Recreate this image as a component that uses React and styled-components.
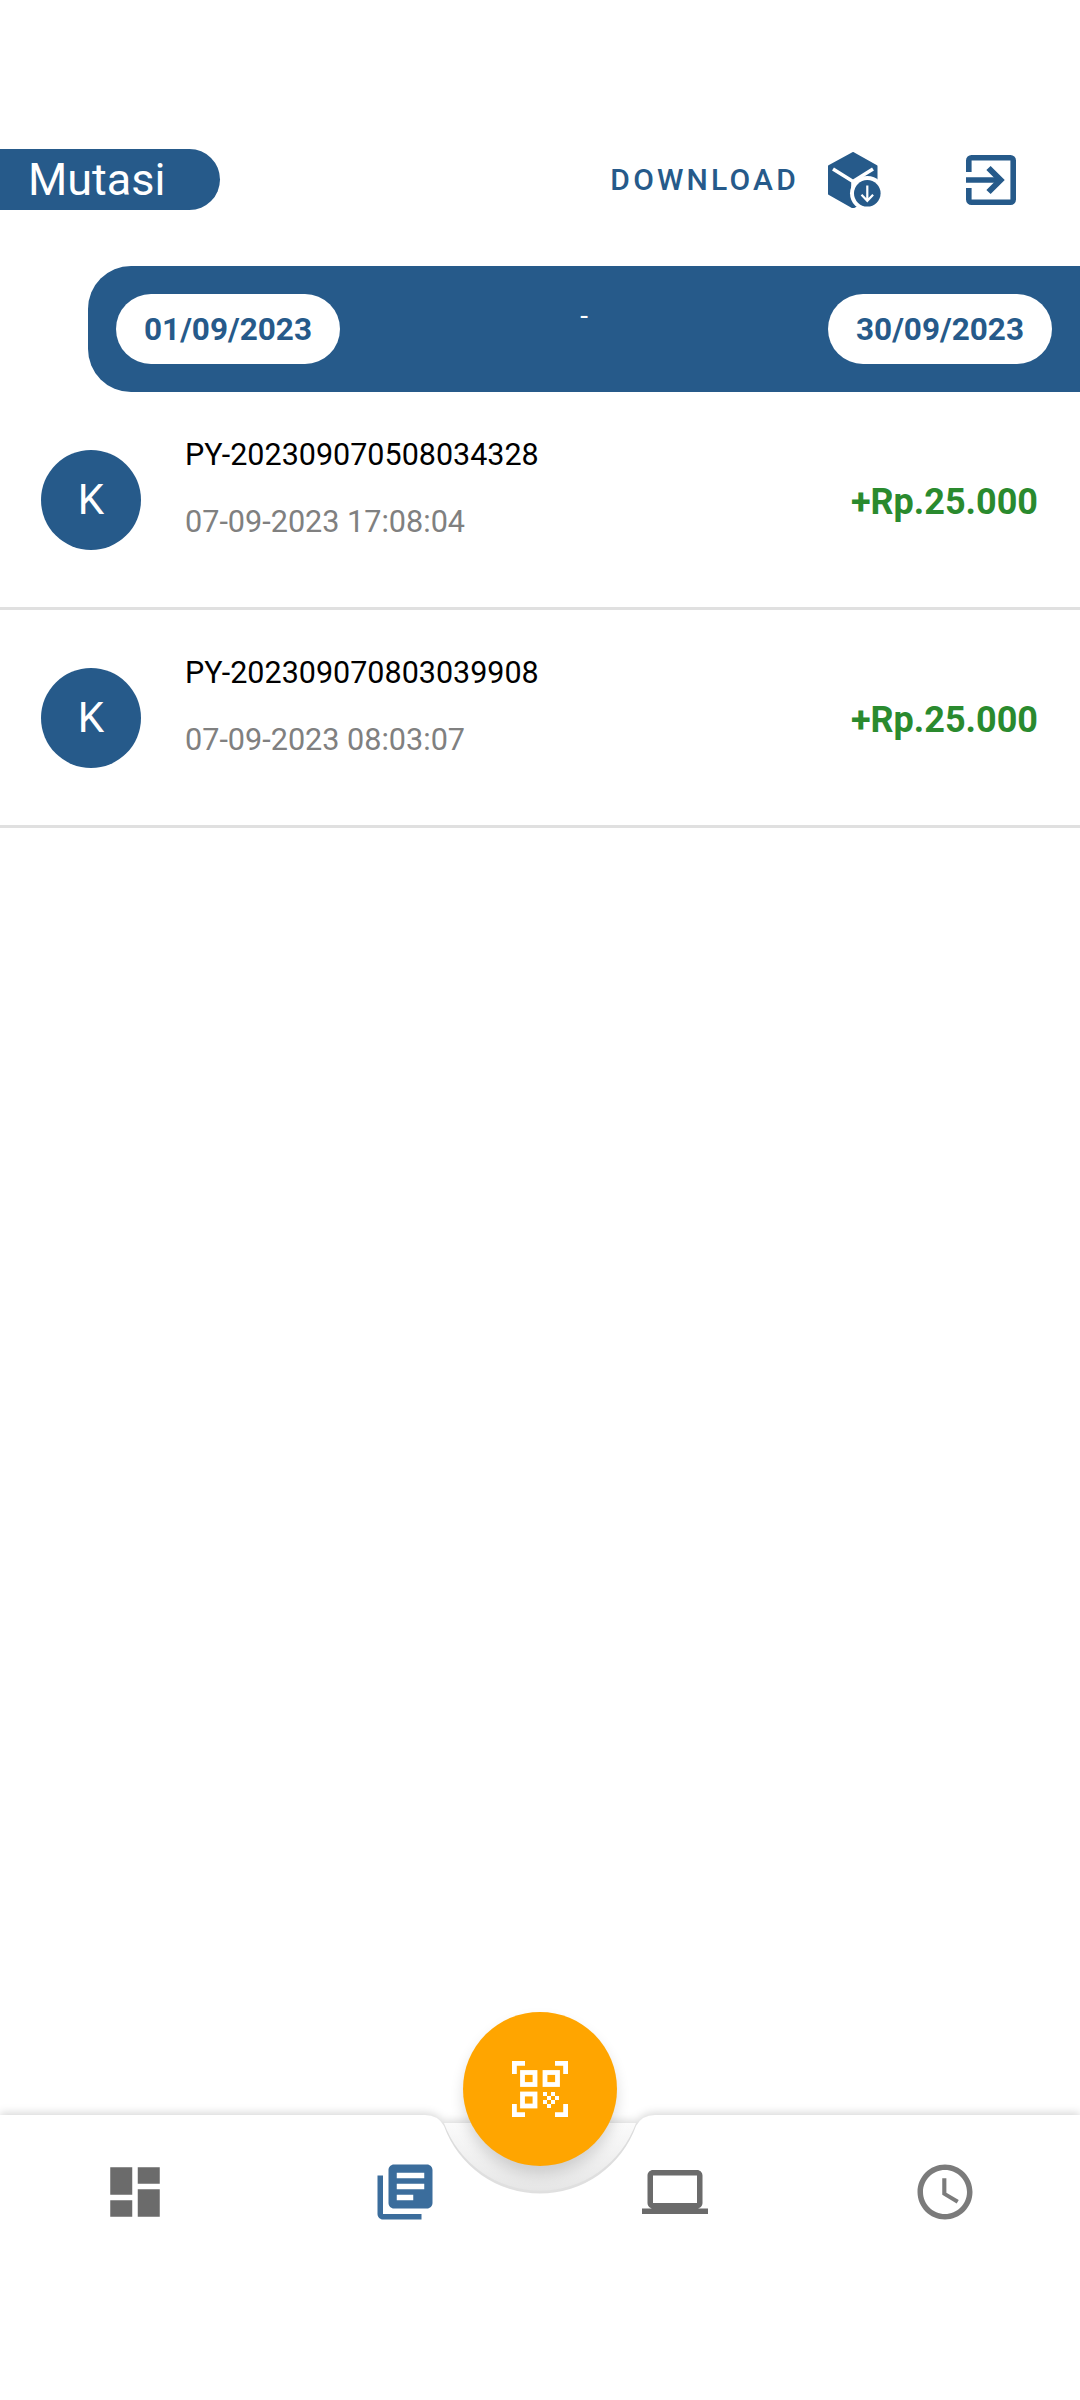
import styled, { createGlobalStyle } from "styled-components";
import { MdDashboard, MdLibraryBooks, MdLaptop, MdAccessTime } from "react-icons/md";

const GlobalStyle = createGlobalStyle`
  html, body {
    margin: 0;
    background: #fff;
    font-family: Roboto, "Liberation Sans", sans-serif;
  }
`;

const BLUE = "#265a8a";

const Page = styled.div`
  width: 1080px;
  height: 2400px;
  display: flex;
  flex-direction: column;
  padding-top: 149px;
  box-sizing: border-box;
  overflow: hidden;
  background: #fff;
`;

const Header = styled.header`
  height: 61px;
  display: flex;
  align-items: center;
  justify-content: space-between;
  padding-right: 64px;
`;

const TitlePill = styled.h1`
  width: 220px;
  height: 61px;
  box-sizing: border-box;
  margin: 0;
  padding-left: 28px;
  display: flex;
  align-items: center;
  background: ${BLUE};
  border-radius: 0 31px 31px 0;
  color: #fff;
  font-size: 45px;
  font-weight: 400;
`;

const Actions = styled.div`
  display: flex;
  align-items: center;
`;

const DownloadLabel = styled.span`
  color: ${BLUE};
  font-size: 30px;
  font-weight: 500;
  letter-spacing: 3.2px;
  margin-right: 29px;
`;

const CubeIcon = styled.svg`
  width: 53px;
  height: 56px;
  margin-right: 85px;
`;

const ExitIcon = styled.svg`
  width: 50px;
  height: 50px;
`;

const DateBar = styled.div`
  margin: 56px 0 0 88px;
  height: 126px;
  padding: 0 28px;
  display: flex;
  align-items: center;
  justify-content: space-between;
  background: ${BLUE};
  border-radius: 43px 0 0 43px;
`;

const DatePill = styled.div`
  width: 224px;
  height: 70px;
  display: flex;
  align-items: center;
  justify-content: center;
  background: #fff;
  border-radius: 35px;
  color: ${BLUE};
  font-size: 31.5px;
  font-weight: 700;
`;

const Dash = styled.span`
  color: #fff;
  font-size: 28px;
  line-height: 28px;
  margin-bottom: 26px;
`;

const List = styled.main`
  flex: 1;
`;

const Row = styled.div`
  height: 215px;
  display: flex;
  align-items: center;
  padding: 0 42px 0 41px;
  border-bottom: 3px solid #e0e0e0;
`;

const Avatar = styled.div`
  width: 100px;
  height: 100px;
  flex: none;
  display: flex;
  align-items: center;
  justify-content: center;
  border-radius: 50%;
  background: ${BLUE};
  color: #fff;
  font-size: 42px;
`;

const RowText = styled.div`
  flex: 1;
  margin: 0 0 23px 44px;
  display: flex;
  flex-direction: column;
  gap: 32px;
`;

const Reference = styled.div`
  color: #000;
  font-size: 30.5px;
  line-height: 35px;
`;

const Timestamp = styled.div`
  color: #808080;
  font-size: 30.6px;
  line-height: 35px;
`;

const Amount = styled.div`
  color: #2a8a2e;
  font-size: 36px;
  font-weight: 700;
  margin-top: 4px;
`;

const Nav = styled.nav`
  position: relative;
  height: 285px;
  box-sizing: border-box;
  padding-top: 44px;
  display: grid;
  grid-template-columns: repeat(4, 1fr);
  justify-items: center;
  align-items: start;
`;

const NavShape = styled.svg`
  position: absolute;
  top: 0;
  left: 0;
  width: 1080px;
  height: 285px;
  overflow: visible;
  filter: drop-shadow(0 -2px 4px rgba(0, 0, 0, 0.16));
`;

const NavItem = styled.div`
  position: relative;
  width: 66px;
  height: 66px;
  font-size: 66px;
  line-height: 0;
  color: ${(p) => (p.$active ? "#3b6d9c" : p.$muted ? "#7b7b7b" : "#6b6b6b")};
`;

const Fab = styled.button`
  position: absolute;
  top: -103px;
  left: 463px;
  width: 154px;
  height: 154px;
  padding: 0;
  border: 0;
  border-radius: 50%;
  display: flex;
  align-items: center;
  justify-content: center;
  background: #ffa500;
  box-shadow: 0 8px 14px rgba(0, 0, 0, 0.14);
`;

const QrIcon = styled.svg`
  width: 56px;
  height: 56px;
`;

const rows = [
  { id: "PY-202309070508034328", time: "07-09-2023 17:08:04" },
  { id: "PY-202309070803039908", time: "07-09-2023 08:03:07" },
];

const App = () => {
  return (
    <Page>
      <GlobalStyle />
      <Header>
        <TitlePill>Mutasi</TitlePill>
        <Actions>
          <DownloadLabel>DOWNLOAD</DownloadLabel>
          <CubeIcon viewBox="18 11 53 56">
            <path
              d="M43.3 12 66.5 25.2V54L43 66.5 19 53V25.2Z"
              fill={BLUE}
              stroke={BLUE}
              strokeWidth="2"
              strokeLinejoin="round"
            />
            <path
              d="M23 28 43 40.5 63 28M43 40.5V56"
              fill="none"
              stroke="#fff"
              strokeWidth="3.6"
            />
            <circle cx="57.3" cy="52.3" r="17.3" fill="#fff" />
            <circle cx="57.3" cy="52.3" r="13.3" fill={BLUE} />
            <path
              d="M57.3 44.5V59.5M51.5 53.8 57.3 59.8 63.1 53.8"
              fill="none"
              stroke="#fff"
              strokeWidth="2.2"
            />
          </CubeIcon>
          <ExitIcon viewBox="0 0 50 50" fill="none" stroke={BLUE} strokeWidth="5.6">
            <path d="M2.8 17V5.5a2.7 2.7 0 0 1 2.7-2.7h39a2.7 2.7 0 0 1 2.7 2.7v39a2.7 2.7 0 0 1-2.7 2.7h-39a2.7 2.7 0 0 1-2.7-2.7V33" />
            <path d="M0 25H34" />
            <path d="M22.5 13 34.5 25 22.5 37" strokeWidth="6" />
          </ExitIcon>
        </Actions>
      </Header>

      <DateBar>
        <DatePill>01/09/2023</DatePill>
        <Dash>-</Dash>
        <DatePill>30/09/2023</DatePill>
      </DateBar>

      <List>
        {rows.map((row) => (
          <Row key={row.id}>
            <Avatar>K</Avatar>
            <RowText>
              <Reference>{row.id}</Reference>
              <Timestamp>{row.time}</Timestamp>
            </RowText>
            <Amount>+Rp.25.000</Amount>
          </Row>
        ))}
      </List>

      <Nav>
        <NavShape viewBox="0 0 1080 285">
          <defs>
            <linearGradient id="notchShade" x1="0" y1="0" x2="0" y2="1">
              <stop offset="0" stopColor="#fbfbfb" />
              <stop offset="1" stopColor="#e6e6e6" />
            </linearGradient>
          </defs>
          <path d="M444 8A102 102 0 0 0 636 8Z" fill="url(#notchShade)" />
          <path
            d="M0 0H425Q438 0 444 11A102 102 0 0 0 636 11Q642 0 655 0H1080V285H0Z"
            fill="#fff"
          />
        </NavShape>
        <NavItem>
          <MdDashboard />
        </NavItem>
        <NavItem $active>
          <MdLibraryBooks />
        </NavItem>
        <NavItem>
          <MdLaptop />
        </NavItem>
        <NavItem $muted>
          <MdAccessTime />
        </NavItem>
        <Fab>
          <QrIcon viewBox="0 0 56 56" fill="none" stroke="#fff" strokeWidth="4.8">
            <path d="M13 2.4H2.4V13M43 2.4H53.6V13M13 53.6H2.4V43M43 53.6H53.6V43" />
            <rect x="10.5" y="11.5" width="12.5" height="12" />
            <rect x="33" y="11.5" width="12.5" height="12" />
            <rect x="10.5" y="33" width="12.5" height="12" />
            <path
              d="M31 31h4v4h-4zM39 31h4v4h-4zM35 35h4v4h-4zM43 35h4v4h-4zM31 39h4v4h-4zM39 39h4v4h-4zM35 43h4v4h-4z"
              fill="#fff"
              stroke="none"
            />
          </QrIcon>
        </Fab>
      </Nav>
    </Page>
  );
};

export default App;
